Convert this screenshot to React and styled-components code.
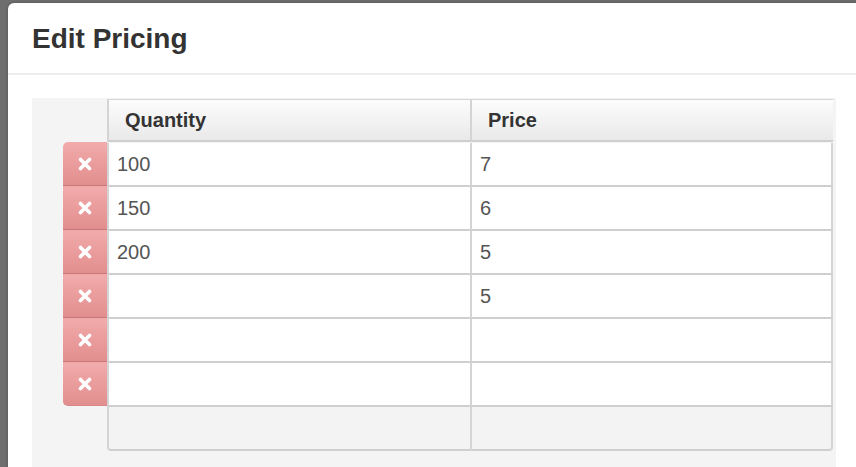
import React from 'react';
import styled, { createGlobalStyle } from 'styled-components';

const GlobalStyle = createGlobalStyle`
    html, body {
        margin: 0;
        padding: 0;
        width: 856px;
        height: 467px;
        overflow: hidden;
        background: #6e6e6e;
        font-family: "Liberation Sans", Arial, sans-serif;
    }
`;

const Backdrop = styled.div`
    width: 856px;
    height: 467px;
    padding: 3px 0 0 8px;
    box-sizing: border-box;
    overflow: hidden;
`;

const Modal = styled.div`
    width: 900px;
    height: 500px;
    background: #fff;
    border-radius: 6px 0 0 0;
    box-shadow: 0 0 3px rgba(0, 0, 0, 0.3);
`;

const Header = styled.div`
    height: 72px;
    padding: 0 24px;
    display: flex;
    align-items: center;
    border-bottom: 2px solid #ececec;
    box-sizing: border-box;
`;

const Title = styled.h3`
    margin: 0;
    padding-top: 2px;
    font-size: 28px;
    font-weight: bold;
    color: #333;
`;

const Body = styled.div`
    padding: 23px 0 0 24px;
`;

const Panel = styled.div`
    width: 804px;
    height: 400px;
    background: #f4f4f4;
    padding: 1px 0 0 31px;
    box-sizing: border-box;
    display: flex;
`;

const DeleteColumn = styled.div`
    width: 44px;
    padding-top: 43px;
    display: flex;
    flex-direction: column;
`;

const DeleteButton = styled.button`
    width: 44px;
    height: 44px;
    padding: 0;
    border: none;
    border-bottom: 1px solid #c97878;
    background: linear-gradient(#f2abab, #e28e8e);
    display: flex;
    align-items: center;
    justify-content: center;
    box-sizing: border-box;
    &:first-child {
        border-top-left-radius: 5px;
    }
    &:last-child {
        border-bottom-left-radius: 5px;
        border-bottom-color: #d48888;
    }
`;

const Table = styled.div`
    width: 726px;
    display: grid;
    grid-template-columns: 363px 363px;
    grid-auto-rows: 44px;
`;

const HeadCell = styled.div`
    height: 43px;
    display: flex;
    align-items: center;
    padding-left: 16px;
    font-size: 20px;
    font-weight: bold;
    color: #333;
    background: linear-gradient(#fdfdfd, #e9e9e9);
    border-top: 1px solid #d6d6d6;
    border-left: 2px solid #d4d4d4;
    border-bottom: 2px solid #cfcfcf;
    box-sizing: border-box;
    &:last-child {
        border-right: 2px solid #d4d4d4;
        border-top-right-radius: 4px;
    }
`;

const Cell = styled.div`
    display: flex;
    align-items: center;
    padding-left: 8px;
    font-size: 20px;
    color: #555;
    background: ${p => (p.$foot ? '#f3f3f3' : '#fff')};
    border-left: 2px solid #d4d4d4;
    border-right: ${p => (p.$last ? '2px solid #d4d4d4' : 'none')};
    border-bottom: 2px solid #cfcfcf;
    border-bottom-right-radius: ${p => (p.$foot && p.$last ? '4px' : '0')};
    border-bottom-left-radius: ${p => (p.$foot && !p.$last ? '4px' : '0')};
    box-sizing: border-box;
`;

const rows = [
    { qty: '100', price: '7' },
    { qty: '150', price: '6' },
    { qty: '200', price: '5' },
    { qty: '', price: '5' },
    { qty: '', price: '' },
    { qty: '', price: '' },
];

const CrossIcon = () => (
    <svg width="14" height="14" viewBox="0 0 14 14">
        <path d="M2.5 2.5 L11.5 11.5 M11.5 2.5 L2.5 11.5" stroke="#fff" strokeWidth="3.6" strokeLinecap="round" />
    </svg>
);

export default function App () {
    return (
        <Backdrop>
            <GlobalStyle />
            <Modal>
                <Header>
                    <Title>Edit Pricing</Title>
                </Header>
                <Body>
                    <Panel>
                        <DeleteColumn>
                            {rows.map((r, idx) => (
                                <DeleteButton key={idx}><CrossIcon /></DeleteButton>
                            ))}
                        </DeleteColumn>
                        <Table>
                            <HeadCell>Quantity</HeadCell>
                            <HeadCell>Price</HeadCell>
                            {rows.map((r, idx) => (
                                <React.Fragment key={idx}>
                                    <Cell>{r.qty}</Cell>
                                    <Cell $last>{r.price}</Cell>
                                </React.Fragment>
                            ))}
                            <Cell $foot />
                            <Cell $foot $last />
                        </Table>
                    </Panel>
                </Body>
            </Modal>
        </Backdrop>
    );
}
